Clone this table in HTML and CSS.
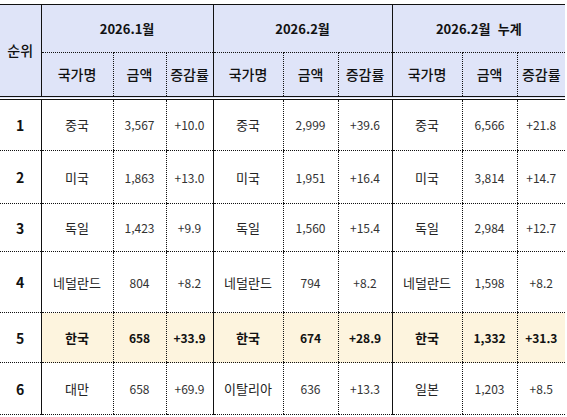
FILE: index.html
```html
<!DOCTYPE html>
<html lang="ko">
<head>
    <meta charset="UTF-8">
    <meta name="viewport" content="width=device-width, initial-scale=1.0">
    <title>국가별 수출 순위</title>
    <link rel="stylesheet" href="styles.css">
</head>
<body>
    <table class="rank-table">
        <colgroup>
            <col class="c-rank">
            <col class="c-name">
            <col class="c-amt">
            <col class="c-rate">
            <col class="c-name2">
            <col class="c-amt2">
            <col class="c-rate2">
            <col class="c-name2">
            <col class="c-amt2">
            <col class="c-rate3">
        </colgroup>
        <thead>
            <tr class="head-top">
                <th rowspan="2" class="rank">순위</th>
                <th colspan="3" class="group">2026.1월</th>
                <th colspan="3" class="group">2026.2월</th>
                <th colspan="3" class="group">2026.2월&nbsp; 누계</th>
            </tr>
            <tr class="head-sub">
                <th class="g-start">국가명</th><th>금액</th><th>증감률</th>
                <th class="g-start">국가명</th><th>금액</th><th>증감률</th>
                <th class="g-start">국가명</th><th>금액</th><th>증감률</th>
            </tr>
        </thead>
        <tbody>
            <tr class="r1">
                <td class="rank">1</td>
                <td class="g-start">중국</td><td>3,567</td><td>+10.0</td>
                <td class="g-start">중국</td><td>2,999</td><td>+39.6</td>
                <td class="g-start">중국</td><td>6,566</td><td>+21.8</td>
            </tr>
            <tr class="r2">
                <td class="rank">2</td>
                <td class="g-start">미국</td><td>1,863</td><td>+13.0</td>
                <td class="g-start">미국</td><td>1,951</td><td>+16.4</td>
                <td class="g-start">미국</td><td>3,814</td><td>+14.7</td>
            </tr>
            <tr class="r3">
                <td class="rank">3</td>
                <td class="g-start">독일</td><td>1,423</td><td>+9.9</td>
                <td class="g-start">독일</td><td>1,560</td><td>+15.4</td>
                <td class="g-start">독일</td><td>2,984</td><td>+12.7</td>
            </tr>
            <tr class="r4">
                <td class="rank">4</td>
                <td class="g-start">네덜란드</td><td>804</td><td>+8.2</td>
                <td class="g-start">네덜란드</td><td>794</td><td>+8.2</td>
                <td class="g-start">네덜란드</td><td>1,598</td><td>+8.2</td>
            </tr>
            <tr class="r5 korea">
                <td class="rank">5</td>
                <td class="g-start">한국</td><td>658</td><td>+33.9</td>
                <td class="g-start">한국</td><td>674</td><td>+28.9</td>
                <td class="g-start">한국</td><td>1,332</td><td>+31.3</td>
            </tr>
            <tr class="r6">
                <td class="rank">6</td>
                <td class="g-start">대만</td><td>658</td><td>+69.9</td>
                <td class="g-start">이탈리아</td><td>636</td><td>+13.3</td>
                <td class="g-start">일본</td><td>1,203</td><td>+8.5</td>
            </tr>
        </tbody>
    </table>
</body>
</html>
```

FILE: styles.css
```css
* { box-sizing: border-box; }

body {
    margin: 0;
    padding-top: 4px;
    background: #ffffff;
    font-family: "Noto Sans CJK KR", "Noto Sans", sans-serif;
    color: #222222;
}

.rank-table {
    border-collapse: collapse;
    table-layout: fixed;
    width: 564px;
    font-size: 12px;
}

.c-rank { width: 41px; }
.c-name { width: 72px; }
.c-amt { width: 53px; }
.c-rate { width: 47px; }
.c-name2 { width: 70px; }
.c-amt2 { width: 55px; }
.c-rate2 { width: 54px; }
.c-rate3 { width: 48px; }

.rank-table th,
.rank-table td {
    padding: 0;
    text-align: center;
    vertical-align: middle;
    border-left: 1px dotted #111;
    border-bottom: 1px dotted #111;
    white-space: nowrap;
}

.rank-table th {
    background: #dfe4f8;
    color: #111;
    font-weight: 700;
    font-size: 13px;
}

.head-top th {
    border-top: 1px solid #111;
    height: 48px;
}

.head-sub th {
    height: 45px;
    border-bottom: 4px double #111;
    font-weight: 500;
    font-size: 14px;
}

.rank-table th.rank {
    border-left: none;
    border-bottom: 4px double #111;
    font-weight: 500;
    font-size: 14px;
}

.rank-table .group,
.rank-table .g-start {
    border-left: 1px solid #111;
}

.rank-table td.rank {
    border-left: none;
    font-weight: 700;
    font-size: 14px;
    color: #111;
}

.rank-table td {
    color: #333;
}

.rank-table td.g-start {
    font-size: 13px;
    color: #222;
}

.r1 td { height: 53px; }
.r2 td { height: 53px; }
.r3 td { height: 48px; }
.r4 td { height: 61px; }
.r5 td { height: 50px; }
.r6 td { height: 52px; }

.korea td {
    background: #fdf4de;
    font-weight: 700;
    color: #111;
}

.korea td.g-start {
    color: #111;
}

.korea td.rank {
    background: #ffffff;
}
```
